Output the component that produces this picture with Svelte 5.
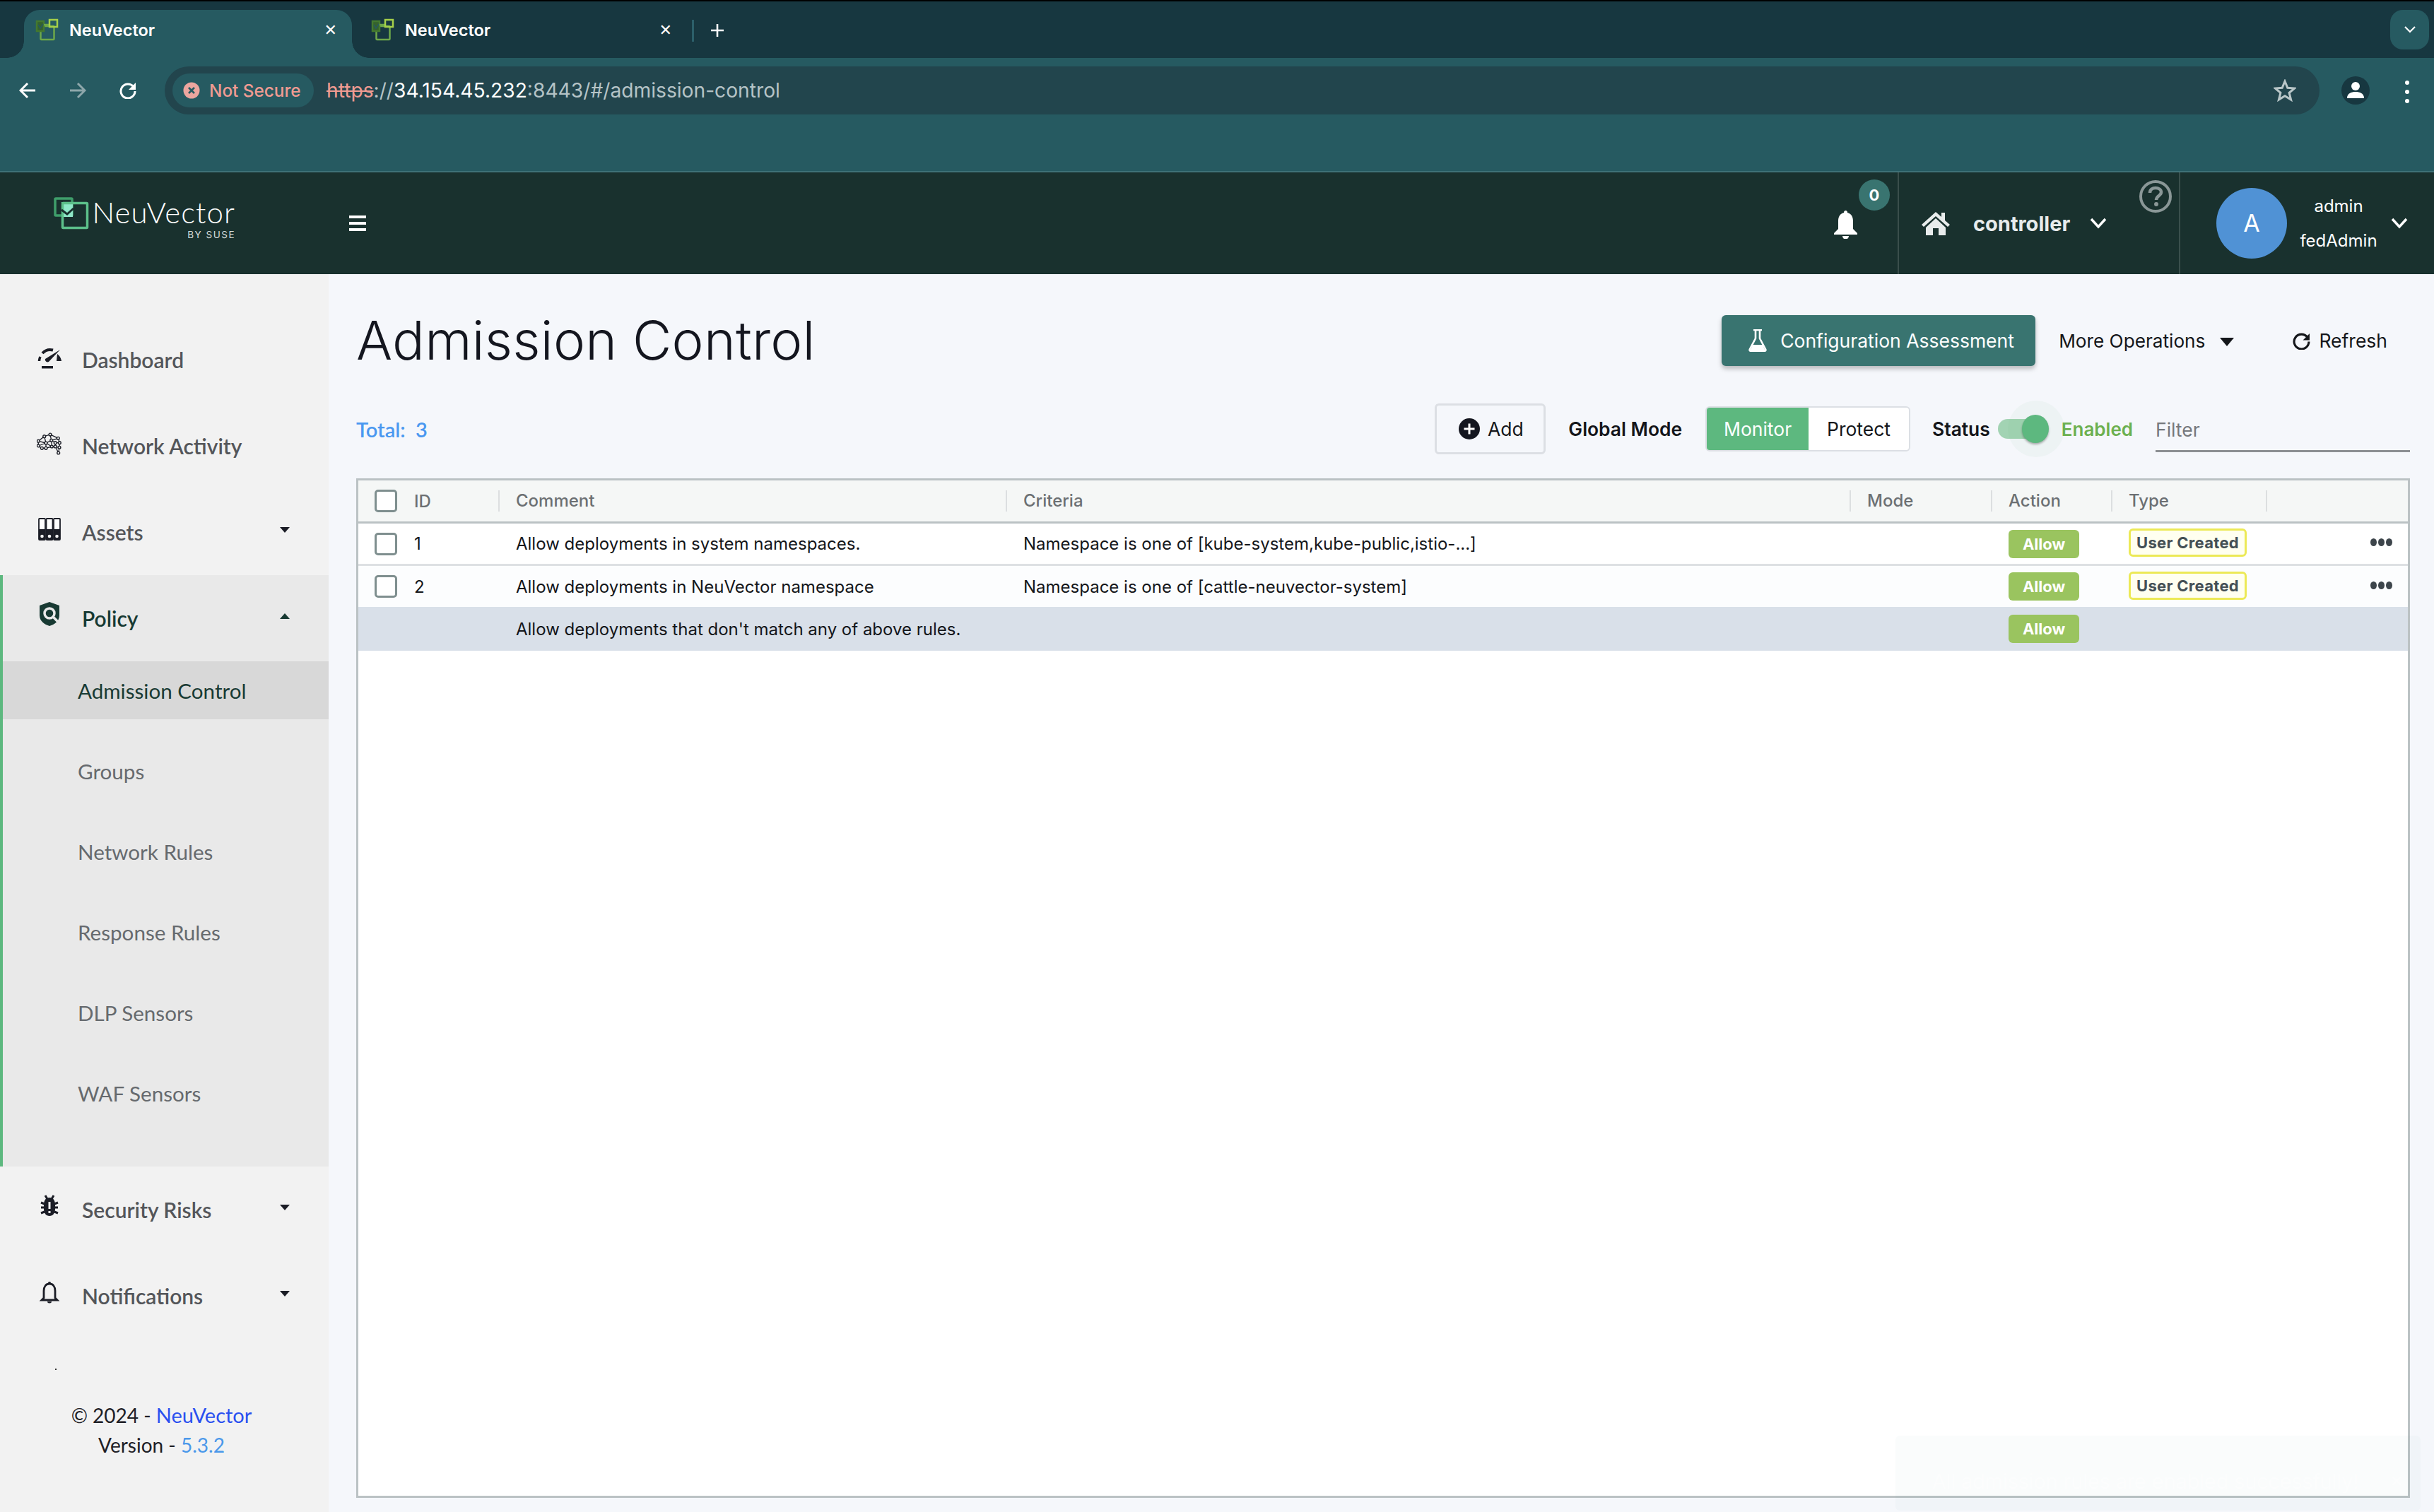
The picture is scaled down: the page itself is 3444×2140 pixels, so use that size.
<script>
  const mainItems = [
    { label: 'Dashboard', icon: 'gauge' },
    { label: 'Network Activity', icon: 'brain' },
    { label: 'Assets', icon: 'assets', caret: true }
  ]
  const subItems = ['Admission Control', 'Groups', 'Network Rules', 'Response Rules', 'DLP Sensors', 'WAF Sensors']
  const rules = [
    { id: 1, comment: 'Allow deployments in system namespaces.', criteria: 'Namespace is one of [kube-system,kube-public,istio-...]' },
    { id: 2, comment: 'Allow deployments in NeuVector namespace', criteria: 'Namespace is one of [cattle-neuvector-system]' }
  ]
  const columns = ['Comment', 'Criteria', 'Mode', 'Action', 'Type', '']
  // brain icon nodes, traced off the reference
  const brainNodes = [[2.3,16.3],[10.7,9.7],[19,7],[30.3,12.3],[20.7,15.3],[13,19],[2.3,23],[7.3,26.3],[13,26.3],[21.3,24],[26.3,18.7],[32.3,18.7],[26.3,24],[32,25.3],[30.7,33]]
</script>

{#snippet favicon()}
  <svg class="favicon" viewBox="0 0 33 32">
    <rect x="7.500" y="11" width="19" height="19" rx="1" fill="none" stroke="#6ea84a" stroke-width="2.500" />
    <rect x="2" y="4" width="10" height="14" fill="#35622e" stroke="#44792f" stroke-width="2.500" />
    <path d="M4 9l3 5 4-6" fill="none" stroke="#265a61" stroke-width="1.500" />
    <path d="M12 9h8" stroke="#6ea84a" stroke-width="2.500" />
    <rect x="20" y="2" width="11" height="10" fill="none" stroke="#a6d04a" stroke-width="2.500" />
  </svg>
{/snippet}

{#snippet navIcon(name)}
  <svg class="nav-icon" viewBox="0 0 36 36">
    {#if name === 'gauge'}
      <path d="M3.500 25a15 15 0 0 1 1.500-6" fill="none" stroke="#1b1d26" stroke-width="3.500" />
      <path d="M8 14a15 15 0 0 1 15-4.500" fill="none" stroke="#1b1d26" stroke-width="4" />
      <path d="M33 9 17 26a3.500 3.500 0 0 1-5-4z" fill="#1b1d26" />
      <path d="M29 15a15 15 0 0 1 6 10h-7z" fill="#1b1d26" />
      <rect x="7" y="32" width="16" height="3.500" fill="#1b1d26" />
    {:else if name === 'brain'}
      <g fill="none" stroke="#1b1d26" stroke-width="1.300">
        <path d="M2.300 16.300 10.700 9.700 19 7 30.300 12.300 32.300 18.700 32 25.300 30.700 33 26.300 24 21.300 24 13 26.300 7.300 26.300 2.300 23 2.300 16.300" />
        <path d="M10.700 9.700 13 19 20.700 15.300 19 7M20.700 15.300 30.300 12.300M20.700 15.300 26.300 18.700 32.300 18.700M26.300 18.700 26.300 24 32 25.300M13 19 2.300 16.300M13 19 2.300 23M13 19 13 26.300M13 19 21.300 24 20.700 15.300" />
      </g>
      {#each brainNodes as [cx, cy]}
        <circle {cx} {cy} r="1.900" fill="#f2f2f2" stroke="#1b1d26" stroke-width="1.400" />
      {/each}
    {:else if name === 'assets'}
      {#each [3, 13.500, 24] as x}
        <rect {x} y="4" width="9" height="30" rx="1" fill="#fff" stroke="#1b1d26" stroke-width="1.800" />
        <path d="M{x} 19h9v14a1 1 0 0 1-1 1h-7a1 1 0 0 1-1-1z" fill="#1b1d26" />
        <circle cx={x + 4.500} cy="29" r="2.300" fill="#f2f2f2" />
      {/each}
    {:else if name === 'policy'}
      <path d="M18 0 32 5v14c0 8-7 13-14 15C11 32 4 27 4 19V5z" fill="#183a33" />
      <circle cx="18" cy="16" r="7" fill="none" stroke="#e9e9e9" stroke-width="3.500" />
      <path d="M23 21l7 7" stroke="#e9e9e9" stroke-width="3.500" />
    {:else if name === 'bug'}
      <path d="M12 3l3 5M24 3l-3 5M6 13l5 2M30 13l-5 2M6 20h5M30 20h-5M6 28l5-2M30 28l-5-2" stroke="#1b1d26" stroke-width="3" />
      <path d="M18 6c6 0 8 5 8 10v6c0 6-3 10-8 10s-8-4-8-10v-6c0-5 2-10 8-10z" fill="#1b1d26" />
      <path d="M16.500 12h3v10h-3zM16.500 25h3v3h-3z" fill="#f2f2f2" />
    {:else}
      <path d="M18 6c5 0 8 4 8 10v10l3 3H7l3-3V16c0-6 3-10 8-10z" fill="none" stroke="#1b1d26" stroke-width="2.800" />
      <circle cx="18" cy="5" r="2" fill="#1b1d26" />
      <path d="M15 31h6a3 2.500 0 0 1-6 0z" fill="#1b1d26" />
    {/if}
  </svg>
{/snippet}

<div class="page">
  <div class="blackline"></div>

  <div class="tabstrip">
    <div class="tab active">
      {@render favicon()}
      <span class="tab-title">NeuVector</span>
      <span class="tab-close">✕</span>
    </div>
    <div class="tab">
      {@render favicon()}
      <span class="tab-title">NeuVector</span>
      <span class="tab-close">✕</span>
    </div>
    <div class="tab-sep"></div>
    <svg class="newtab" viewBox="0 0 20 20"><path d="M10 1v18M1 10h18" stroke="#fff" stroke-width="2.600" /></svg>
    <div class="tab-menu">
      <svg viewBox="0 0 16 10"><path d="M1 1l7 7 7-7" fill="none" stroke="#fff" stroke-width="2.200" /></svg>
    </div>
  </div>

  <div class="toolbar">
    <svg class="tb-icon" viewBox="0 0 24 24"><path d="M23 12H3M12 2 2 12l10 10" fill="none" stroke="#fff" stroke-width="3" /></svg>
    <svg class="tb-icon dim" viewBox="0 0 24 24"><path d="M1 12h20M12 2l10 10-10 10" fill="none" stroke="#8ea7ab" stroke-width="3" /></svg>
    <svg class="tb-icon reload" viewBox="0 0 24 24"><path d="M20 7A10 10 0 1 0 22 13" fill="none" stroke="#fff" stroke-width="3" /><path d="M23 1v10H13z" fill="#fff" /></svg>
    <div class="omnibox">
      <div class="not-secure">
        <svg viewBox="0 0 24 24"><circle cx="12" cy="12" r="11.500" fill="#eca69f" /><path d="M8 8l8 8M16 8l-8 8" stroke="#265a61" stroke-width="2.600" /></svg>
        <span>Not Secure</span>
      </div>
      <div class="url"><span class="url-https">https</span><span class="url-dim">://</span><span class="url-host">34.154.45.232</span><span class="url-dim">:8443/#/admission-control</span></div>
      <svg class="star" viewBox="0 0 32 32"><path d="M16 3l3.800 9.300 10 .7-7.700 6.400 2.500 9.700L16 23.800l-8.600 5.300 2.500-9.700L2.200 13l10-.7z" fill="none" stroke="#b9c6c8" stroke-width="3" /></svg>
    </div>
    <div class="account">
      <svg viewBox="0 0 40 40"><circle cx="20" cy="20" r="20" fill="#173740" /><circle cx="20" cy="14" r="6" fill="#fff" /><path d="M8 31c0-7 6-9 12-9s12 2 12 9z" fill="#fff" /></svg>
    </div>
    <div class="kebab"><i></i><i></i><i></i></div>
  </div>

  <header class="appbar">
    <div class="logo">
      <svg viewBox="0 0 50 46" class="logo-mark">
        <rect x="2" y="2" width="24" height="24" rx="1" fill="none" stroke="#3f9e6b" stroke-width="3.500" />
        <rect x="11" y="7" width="16" height="21" fill="#8fe8c8" />
        <rect x="12.500" y="8.500" width="35" height="35" rx="1" fill="none" stroke="#5cc08a" stroke-width="3.500" />
        <path d="M11 18l8 6 9-8" fill="none" stroke="#19312e" stroke-width="3" />
      </svg>
      <div class="logo-text">
        <span class="logo-name">NeuVector</span>
        <span class="logo-sub">BY SUSE</span>
      </div>
    </div>
    <div class="hamburger"><i></i><i></i><i></i></div>
    <div class="appbar-right">
      <div class="bell-area">
        <svg class="bell" viewBox="0 0 33 40"><path d="M16.500 0a2.500 2.500 0 0 1 2.500 3c6 1.500 8 6.500 8 12v11l6 6v2H0v-2l6-6V15C6 9.500 8 4.500 14 3a2.500 2.500 0 0 1 2.500-3z" fill="#fff" /><path d="M12 36h9a4.500 4.500 0 0 1-9 0z" fill="#fff" /></svg>
        <span class="count">0</span>
      </div>
      <div class="cluster">
        <svg class="home" viewBox="0 0 42 34"><path d="M21 1 1 19l3 3L21 7l17 15 3-3-7-6V2h-5v6z" fill="#e8ecec" /><path d="M7 23 21 10l14 13v11H25V24h-8v10H7z" fill="#e8ecec" /></svg>
        <span class="cluster-name">controller</span>
        <svg class="chev" viewBox="0 0 24 16"><path d="M2 2l10 11L22 2" fill="none" stroke="#fff" stroke-width="3.500" /></svg>
        <svg class="help" viewBox="0 0 46 46"><circle cx="23" cy="23" r="21" fill="none" stroke="#8a9797" stroke-width="4" /><path d="M15 18c0-5 4-7 8-7s8 2 8 6c0 5-7 5-7 11" fill="none" stroke="#8a9797" stroke-width="4.500" /><circle cx="24" cy="34" r="3" fill="#8a9797" /></svg>
      </div>
      <div class="user">
        <div class="avatar">A</div>
        <div class="user-text"><span>admin</span><span>fedAdmin</span></div>
        <svg class="chev user-chev" viewBox="0 0 24 16"><path d="M2 2l10 11L22 2" fill="none" stroke="#fff" stroke-width="3.500" /></svg>
      </div>
    </div>
  </header>

  <div class="body">
    <aside class="sidebar">
      <nav>
        {#each mainItems as item}
          <div class="nav-item">
            {@render navIcon(item.icon)}
            <span>{item.label}</span>
            {#if item.caret}<i class="caret"></i>{/if}
          </div>
        {/each}
        <div class="policy">
          <div class="nav-item open">
            {@render navIcon('policy')}
            <span>Policy</span>
            <i class="caret up"></i>
          </div>
          <div class="subs">
            {#each subItems as sub, i}
              <div class="sub" class:current={i === 0}>{sub}</div>
            {/each}
          </div>
        </div>
        <div class="nav-item">
          {@render navIcon('bug')}
          <span>Security Risks</span>
          <i class="caret"></i>
        </div>
        <div class="nav-item">
          {@render navIcon('bell')}
          <span>Notifications</span>
          <i class="caret"></i>
        </div>
      </nav>
      <div class="speck"></div>
      <footer class="side-foot">
        <div>© 2024 - <span class="link-strong">NeuVector</span></div>
        <div>Version - <span class="link-soft">5.3.2</span></div>
      </footer>
    </aside>

    <main class="main">
      <div class="title-row">
        <h1>Admission Control</h1>
        <button class="config-btn">
          <svg viewBox="0 0 26 32"><path d="M7 1h12M10 2v11L2 28c-1 2 0 3 2 3h18c2 0 3-1 2-3L16 13V2" fill="none" stroke="#fff" stroke-width="2.600" /><path d="M6 22h14l4 9H2z" fill="#fff" /></svg>
          Configuration Assessment
        </button>
        <span class="more">More Operations <i class="more-caret"></i></span>
        <span class="refresh">
          <svg viewBox="0 0 24 24"><path d="M20 7A10 10 0 1 0 22 13" fill="none" stroke="#14161a" stroke-width="3" /><path d="M23 2v9H14z" fill="#14161a" /></svg>
          Refresh
        </span>
      </div>

      <div class="controls">
        <span class="total">Total:&nbsp; 3</span>
        <button class="add-btn">
          <svg viewBox="0 0 30 30"><circle cx="15" cy="15" r="15" fill="#14161f" /><path d="M15 7.500v15M7.500 15h15" stroke="#fff" stroke-width="3" /></svg>
          Add
        </button>
        <span class="strong-label mode-label">Global Mode</span>
        <div class="segment">
          <span class="seg on">Monitor</span>
          <span class="seg">Protect</span>
        </div>
        <span class="strong-label status-label">Status</span>
        <div class="switch"><span class="track"></span><span class="halo"></span><span class="thumb"></span></div>
        <span class="enabled">Enabled</span>
        <div class="filter">Filter</div>
      </div>

      <div class="table">
        <div class="row head">
          <div class="cell first"><span class="check"></span><span>ID</span></div>
          {#each columns as col}
            <div class="cell"><span class="hlabel">{col}</span></div>
          {/each}
        </div>
        {#each rules as r}
          <div class="row item">
            <div class="cell first"><span class="check"></span><span>{r.id}</span></div>
            <div class="cell body-cell">{r.comment}</div>
            <div class="cell body-cell">{r.criteria}</div>
            <div class="cell body-cell"></div>
            <div class="cell body-cell"><span class="allow">Allow</span></div>
            <div class="cell body-cell"><span class="created">User Created</span></div>
            <div class="cell dots-cell"><span class="dots"><i></i><i></i><i></i></span></div>
          </div>
        {/each}
        <div class="row item default">
          <div class="cell first"></div>
          <div class="cell body-cell">Allow deployments that don't match any of above rules.</div>
          <div class="cell body-cell"></div>
          <div class="cell body-cell"></div>
          <div class="cell body-cell"><span class="allow">Allow</span></div>
          <div class="cell body-cell"></div>
          <div class="cell"></div>
        </div>
      </div>

      <div class="toast">
        <span>All admission rules are enabled successfully!</span>
        <span class="toast-x">✕</span>
      </div>
    </main>
  </div>
</div>

<style>
  :global(body) { margin: 0; background: #f5f7fb; font-family: Inter, sans-serif; }
  .page { width: 3444px; height: 2140px; display: flex; flex-direction: column; overflow: hidden; }
  .blackline { height: 2px; background: #000; flex: none; }

  .tabstrip { height: 80px; flex: none; background: #173740; display: flex; align-items: flex-end; padding-left: 34px; position: relative; }
  .tab { width: 464px; height: 68px; display: flex; align-items: center; padding: 0 0 12px 16px; box-sizing: border-box; }
  .tab.active { background: #265a61; border-radius: 22px 22px 0 0; position: relative; }
  .tab.active::before, .tab.active::after { content: ''; position: absolute; bottom: 0; width: 24px; height: 24px; }
  .tab.active::before { left: -24px; background: radial-gradient(circle at 0 0, transparent 23.500px, #265a61 24px); }
  .tab.active::after { right: -24px; background: radial-gradient(circle at 100% 0, transparent 23.500px, #265a61 24px); }
  .tab + .tab { width: 465px; padding-left: 27px; }
  .tab + .tab .tab-close { margin-right: 12px; }
  .favicon { width: 33px; height: 32px; flex: none; margin-right: 15px; }
  .tab-title { font: 600 23.500px Inter, sans-serif; color: #fff; flex: 1; }
  .tab-close { color: #fff; font: 600 22px "DejaVu Sans", sans-serif; margin-right: 21px; }
  .tab-sep { width: 3px; height: 31px; background: #2c5f6a; margin: 0 0 23px 16px; }
  .newtab { width: 20px; height: 20px; margin: 0 0 29px 23px; }
  .tab-menu { position: absolute; right: 7px; top: 12px; width: 55px; height: 56px; background: #265a61; border-radius: 18px; display: flex; align-items: center; justify-content: center; }
  .tab-menu svg { width: 16px; height: 10px; }

  .toolbar { height: 162px; flex: none; box-sizing: border-box; background: #265a61; border-bottom: 2px solid #3f7177; display: flex; align-items: flex-start; padding: 12px 0 0 27px; }
  .tb-icon { width: 24px; height: 24px; margin-top: 22px; flex: none; margin-right: 47px; }
  .tb-icon.reload { margin-right: 40px; }
  .omnibox { width: 3049px; height: 68px; background: #22454d; border-radius: 34px; display: flex; align-items: center; padding: 0 33px 0 11px; box-sizing: border-box; flex: none; }
  .not-secure { width: 200px; height: 48px; flex: none; background: #265a61; border-radius: 24px; display: flex; align-items: center; gap: 13px; padding-left: 15px; box-sizing: border-box; color: #f09b92; font: 500 24.300px Inter, sans-serif; }
  .not-secure svg { width: 24px; height: 24px; flex: none; }
  .url { margin-left: 18px; font: 400 28.200px Inter, sans-serif; flex: 1; }
  .url-https { color: #f09b92; text-decoration: line-through; }
  .url-dim { color: #b5c3c6; }
  .url-host { color: #fff; }
  .star { width: 32px; height: 32px; flex: none; }
  .account { width: 40px; height: 40px; margin: 14px 0 0 31px; flex: none; }
  .account svg { display: block; width: 40px; height: 40px; }
  .kebab { margin: 20px 0 0 50px; display: flex; flex-direction: column; gap: 7px; }
  .kebab i { width: 6px; height: 6px; border-radius: 50%; background: #fff; display: block; }

  .appbar { height: 144px; background: #19312e; display: flex; align-items: stretch; flex: none; }
  .logo { display: flex; width: 494px; padding: 35px 0 0 76px; box-sizing: border-box; }
  .logo-mark { width: 50px; height: 46px; flex: none; margin-right: 7px; }
  .logo-text { display: flex; flex-direction: column; align-items: flex-end; width: 200px; margin-top: -2px; }
  .logo-name { font: 300 42px/46px Lato, sans-serif; letter-spacing: 1.100px; color: #fff; white-space: nowrap; }
  .logo-sub { font: 400 13.500px/16px Inter, sans-serif; color: #d7dedd; letter-spacing: 1.500px; margin-top: 1px; }
  .hamburger { display: flex; flex-direction: column; gap: 5px; margin-top: 61px; }
  .hamburger i { display: block; width: 24px; height: 4px; background: #fff; }
  .appbar-right { margin-left: auto; display: flex; }
  .bell-area { width: 100px; position: relative; }
  .bell { position: absolute; left: 10px; top: 54px; width: 33px; height: 40px; }
  .count { position: absolute; left: 45px; top: 10px; width: 44px; height: 44px; border-radius: 50%; background: #397470; color: #fff; font: 700 22px/44px Inter, sans-serif; text-align: center; }
  .cluster { width: 398px; box-sizing: border-box; border-left: 2px solid #3a4f4c; display: flex; align-items: center; padding-left: 31px; position: relative; }
  .home { width: 42px; height: 34px; flex: none; margin-right: 32px; }
  .cluster-name { font: 700 29px Inter, sans-serif; color: #e8ecec; margin-right: 28px; }
  .chev { width: 24px; height: 16px; flex: none; }
  .help { position: absolute; left: 340px; top: 11px; width: 46px; height: 46px; }
  .user { width: 361px; box-sizing: border-box; border-left: 2px solid #3a4f4c; display: flex; align-items: center; padding-left: 51px; }
  .avatar { width: 100px; height: 100px; border-radius: 50%; background: #5092d5; color: #fff; font: 400 34px/100px Inter, sans-serif; text-align: center; flex: none; }
  .user-text { width: 106px; margin-left: 20px; display: flex; flex-direction: column; align-items: center; gap: 19px; color: #fff; font: 400 24px/30px Inter, sans-serif; }
  .user-chev { margin-left: 21px; }

  .body { flex: 1; display: flex; min-height: 0; position: relative; }
  .sidebar { width: 465px; flex: none; background: #f2f2f2; padding-top: 60px; box-sizing: border-box; font-family: Lato, sans-serif; }
  .nav-item { height: 122px; display: flex; align-items: center; padding-left: 52px; color: #54565a; font: 600 30px Lato, sans-serif; position: relative; box-sizing: border-box; }
  .nav-icon { width: 36px; height: 36px; flex: none; margin: -10px 28px 0 0; }
  .caret { position: absolute; left: 396px; top: 54px; border: 7px solid transparent; border-top: 8px solid #1b1d26; border-bottom: 0; }
  .caret.up { border-top: 0; border-bottom: 8px solid #183a33; }
  .policy { background: #e9e9e9; border-left: 4px solid #5db87f; }
  .policy .nav-item { padding-left: 48px; color: #183a33; }
  .policy .caret { left: 392px; }
  .subs { display: flex; flex-direction: column; gap: 32px; padding-bottom: 63px; }
  .sub { height: 82px; display: flex; align-items: center; padding-left: 106px; color: #666a6e; font: 400 29.600px Lato, sans-serif; }
  .sub.current { background: #d8d8d8; color: #183a33; }
  .speck { width: 2px; height: 2px; background: #333; margin: 42px 0 0 78px; }
  .side-foot { margin-top: 43px; text-align: center; color: #1e2026; font: 400 28px/42px Lato, sans-serif; width: 457px; }
  .link-strong { color: #2a50f0; font-size: 29px; }
  .link-soft { color: #4a98ea; }

  .main { flex: 1; min-width: 0; padding: 58px 34px 20px 39px; box-sizing: border-box; display: flex; flex-direction: column; font-family: Inter, sans-serif; color: #14161a; }
  .title-row { height: 72px; display: flex; align-items: center; flex: none; }
  h1 { margin: -2px auto 0 0; font: 300 76px/72px Inter, sans-serif; letter-spacing: .3px; color: #14161f; }
  .config-btn { width: 444px; height: 72px; border: 0; border-radius: 6px; background: #397470; color: #fff; font: 400 26.500px Inter, sans-serif; display: flex; align-items: center; justify-content: flex-start; padding: 0 0 0 38px; box-shadow: 0 4px 6px rgba(0,0,0,.25); }
  .config-btn svg { width: 26px; height: 32px; margin-right: 19px; }
  .more { margin-left: 33px; font-size: 26.200px; display: flex; align-items: center; gap: 21px; }
  .more-caret { border: 10px solid transparent; border-top: 12px solid #14161a; border-bottom: 0; margin-top: 4px; }
  .refresh { margin-left: 83px; margin-right: 32px; font-size: 26.500px; display: flex; align-items: center; gap: 12px; }
  .refresh svg { width: 25px; height: 25px; }

  .controls { margin-top: 53px; height: 72px; flex: none; display: flex; align-items: center; }
  .total { font: 600 29px Lato, sans-serif; color: #4a98f0; margin-right: auto; }
  .add-btn { width: 157px; height: 72px; box-sizing: border-box; border: 3px solid #dcdfe4; border-radius: 6px; background: transparent; display: flex; align-items: center; justify-content: center; gap: 11px; font: 400 26.500px Inter, sans-serif; color: #14161a; padding: 0 0 0 2px; }
  .add-btn svg { width: 30px; height: 30px; }
  .strong-label { font: 600 26.400px Inter, sans-serif; color: #14161a; }
  .mode-label { margin-left: 32px; }
  .segment { margin-left: 33px; width: 290px; height: 64px; box-sizing: border-box; border: 2px solid #dcdfe4; border-radius: 6px; display: flex; overflow: hidden; background: #fff; }
  .seg { flex: 1; display: flex; align-items: center; justify-content: center; font-size: 26.500px; }
  .seg.on { background: #5db87f; color: #fff; flex: 0 0 144px; }
  .status-label { margin-left: 31px; }
  .switch { width: 72px; height: 42px; margin-left: 11px; position: relative; flex: none; }
  .track { position: absolute; left: 0; top: 7px; width: 60px; height: 28px; border-radius: 14px; background: #a2d3b3; }
  .halo { position: absolute; left: 14px; top: -19px; width: 80px; height: 80px; border-radius: 50%; background: rgba(93,184,127,.05); }
  .thumb { position: absolute; left: 34px; top: 1px; width: 38px; height: 40px; border-radius: 50%; background: #5db87f; box-shadow: 0 2px 3px rgba(0,0,0,.3); }
  .enabled { margin-left: 18px; font: 600 26px Inter, sans-serif; color: #6cb050; }
  .filter { margin-left: 32px; width: 360px; height: 62px; box-sizing: border-box; border-bottom: 3px solid #8c8f93; color: #75787c; font-size: 26.500px; padding-top: 14px; margin-top: 4px; }

  .table { flex: 1; min-height: 0; border: 3px solid #bbc2c4; background: #fff; box-sizing: border-box; }
  .controls + .table { margin-top: 34px; }
  .row { display: grid; grid-template-columns: 198px 718px 1194px 200px 170px 219px 1fr; box-sizing: border-box; }
  .cell { display: flex; align-items: center; min-width: 0; white-space: nowrap; font-size: 24px; }
  .first { padding-left: 23px; gap: 24px; }
  .check { width: 32px; height: 32px; box-sizing: border-box; border: 3px solid #7f8f8f; border-radius: 5px; background: #fff; flex: none; }
  .head { height: 61px; background: #f5f7f6; border-bottom: 3px solid #bbc2c4; color: #6c7073; font-weight: 500; }
  .hlabel { display: block; height: 30px; line-height: 30px; border-left: 2px solid #dcdfe0; padding-left: 23px; width: 100%; }
  .item { height: 60px; border-bottom: 3px solid #dde0e3; }
  .item.default { height: 62px; background: #d9e0e9; border-bottom: 0; }
  .row.item:nth-child(3) { background: #fcfdfe; border-bottom: 0; height: 58px; }
  .body-cell { padding-left: 25px; }
  .allow { width: 100px; height: 40px; box-sizing: border-box; border-radius: 6px; background: #9ac45f; color: #fff; font: 700 22px/40px Inter, sans-serif; text-align: center; }
  .created { height: 40px; width: 167px; box-sizing: border-box; border: 3px solid #ece956; border-radius: 6px; background: #fffff0; color: #444f55; font: 700 22px/34px Inter, sans-serif; letter-spacing: .3px; text-align: center; margin-top: -3px; }
  .dots-cell { justify-content: flex-end; padding-right: 22px; }
  .dots { display: flex; gap: 2px; margin-top: -4px; }
  .dots i { display: block; width: 9px; height: 11px; border-radius: 50%; background: #3d454b; }

  .toast { position: absolute; left: 2682px; top: 1644px; width: 743px; height: 106px; border-radius: 6px; background: rgba(57,116,112,.025); display: flex; align-items: center; box-sizing: border-box; padding: 22px 0 0 52px; color: rgba(255,255,255,.6); font-size: 29px; font-weight: 300; white-space: nowrap; }
  .toast-x { margin-left: 44px; font-size: 22px; }
</style>
